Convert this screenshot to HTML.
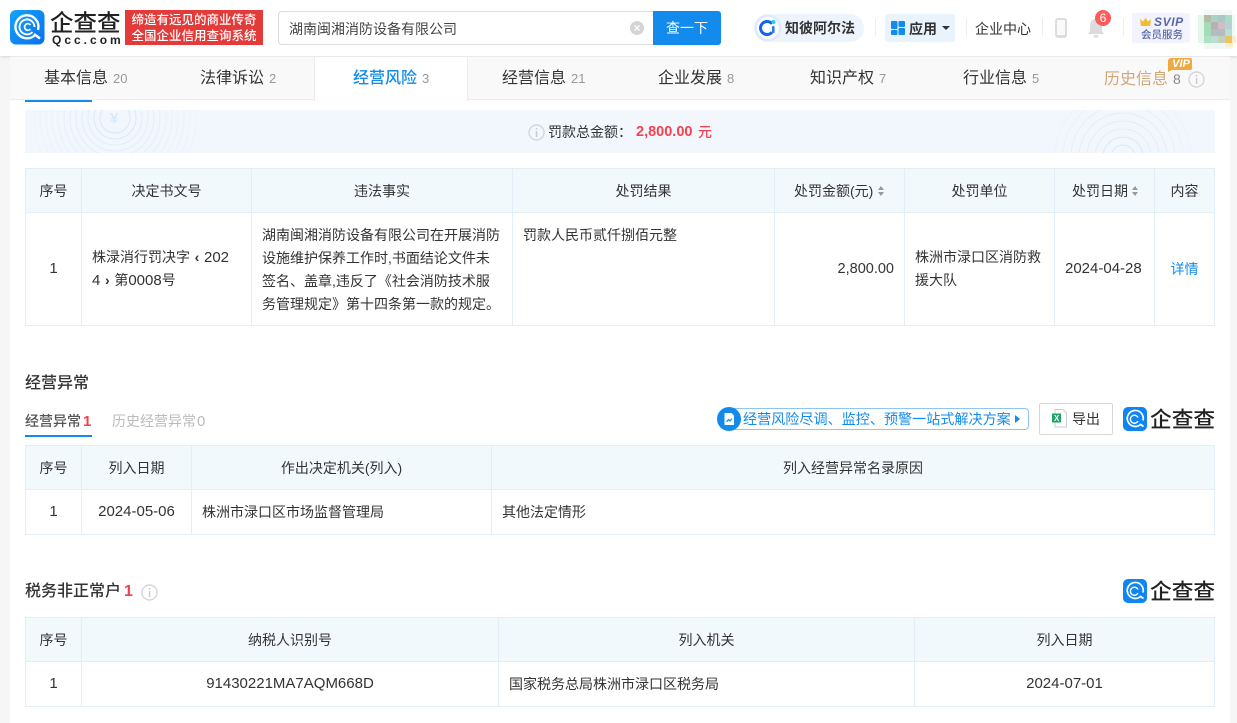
<!DOCTYPE html>
<html lang="zh"><head><meta charset="utf-8"><title>企查查</title>
<style>
*{box-sizing:border-box}
html,body{margin:0;padding:0}
body{width:1237px;height:723px;overflow:hidden;position:relative;background:#f6f6f6;font-family:"Liberation Sans","Noto Sans CJK SC",sans-serif;font-size:14px;color:#333}
.a{position:absolute;white-space:nowrap}
.t{position:absolute;white-space:nowrap;line-height:20px}
.c{text-align:center}
.n{font-size:15px}
.tb{position:absolute;left:25px;width:1190px;border:1px solid #e4eef6;background:#fff}
.th{position:absolute;left:0;top:0;right:0;height:44px;background:#f2f9fc;border-bottom:1px solid #e4eef6}
.l{position:absolute;top:0;bottom:0;width:1px;background:#e4eef6}
.tab{position:absolute;top:68px;font-size:16px;line-height:22px;color:#333;white-space:nowrap}
.tab small{font-size:13px;color:#999;margin-left:5px}
.sort{position:absolute;width:0;height:0;border-left:3px solid transparent;border-right:3px solid transparent}
.sep{position:absolute;top:18px;width:1px;height:18px;background:#eee}
</style></head><body>
<div class="a" style="left:10px;top:56px;width:1220px;height:667px;background:#fff"></div>

<!-- header -->
<div class="a" style="left:0;top:0;width:1237px;height:56px;background:#fff;box-shadow:0 1px 3px rgba(0,0,0,.14)"></div>
<svg class="a" style="left:10px;top:10px" width="35" height="35" viewBox="0 0 35 35"><defs><linearGradient id="g" x1="0" y1="0" x2="1" y2="1"><stop offset="0" stop-color="#14a5f5"/><stop offset="1" stop-color="#0a6ff0"/></linearGradient></defs><rect width="34.500" height="34.500" rx="6" fill="url(#g)"/><path d="M25.500 24.500A11.500 11.500 0 1 1 28 20" fill="none" stroke="#fff" stroke-width="2.400"/><path d="M22.500 22A7.500 7.500 0 1 1 24.500 17" fill="none" stroke="#fff" stroke-width="1.900"/><path d="M20.500 15a3.300 3.300 0 1 0 0 4" fill="none" stroke="#fff" stroke-width="1.700"/><path d="M24 24l6 4.500" stroke="#fff" stroke-width="2.400"/></svg>
<div class="a" style="left:50px;top:8px;font-size:23.500px;line-height:30px;color:#222;width:74px;font-weight:500">企查查</div>
<div class="a" style="left:52px;top:34px;font-size:12px;line-height:12px;color:#222;letter-spacing:3px;font-weight:700">Qcc.com</div>
<div class="a" style="left:125px;top:10px;width:138px;height:35px;background:#e33a3a;color:#fff;font-size:12.500px;line-height:16px;text-align:center;padding-top:2px;font-weight:500">缔造有远见的商业传奇<br>全国企业信用查询系统</div>
<div class="a" style="left:278px;top:11px;width:380px;height:34px;border:1px solid #ddd;border-right:0;border-radius:4px 0 0 4px;background:#fff"></div>
<div class="t" style="left:289px;top:19px;font-size:14px;color:#444">湖南闽湘消防设备有限公司</div>
<svg class="a" style="left:630px;top:21px" width="14" height="14"><circle cx="7" cy="7" r="7" fill="#d4d4d4"/><path d="M4.500 4.500l5 5m0-5l-5 5" stroke="#fff" stroke-width="1.300"/></svg>
<div class="a c" style="left:653px;top:11px;width:68px;height:34px;background:#128bed;color:#fff;line-height:34px;border-radius:0 3px 3px 0">查一下</div>

<div class="a" style="left:754px;top:14px;width:110px;height:28px;border-radius:14px;background:#edf4fe"></div>
<svg class="a" style="left:754px;top:14px" width="28" height="28"><circle cx="14" cy="14" r="13.500" fill="#dfeafc"/><circle cx="14" cy="14" r="11" fill="#fff"/><path d="M18 9.800a6.500 6.500 0 1 0 0 8.400" fill="none" stroke="#1463e8" stroke-width="3"/><rect x="18" y="12" width="2.600" height="7" rx="1" fill="#2a7cf0"/><circle cx="19.500" cy="8" r="2" fill="#1fd0f0"/></svg>
<div class="t" style="left:785px;top:18px;font-size:14px;font-weight:700;color:#333">知彼阿尔法</div>
<div class="sep" style="left:875px"></div>
<div class="a" style="left:885px;top:14px;width:70px;height:28px;background:#e9f3fe;border-radius:3px"></div>
<svg class="a" style="left:891px;top:21px" width="14" height="14"><rect width="6.500" height="8" rx="1" fill="#128bed"/><rect x="7.500" width="6.500" height="6" rx="1" fill="#128bed"/><rect y="9" width="6.500" height="5" rx="1" fill="#128bed"/><rect x="7.500" y="7" width="6.500" height="7" rx="1" fill="#128bed"/></svg>
<div class="t" style="left:909px;top:19px;font-weight:700;font-size:14px">应用</div>
<div class="a" style="left:942px;top:26px;width:0;height:0;border-left:4px solid transparent;border-right:4px solid transparent;border-top:4px solid #333"></div>
<div class="sep" style="left:966px"></div>
<div class="t" style="left:975px;top:19px;font-size:14px;color:#333">企业中心</div>
<div class="sep" style="left:1042px"></div>
<div class="a" style="left:1055px;top:18px;width:12px;height:20px;border:2px solid #dcdcdc;border-radius:3px;border-bottom-width:3px;background:#fafafa"></div>
<svg class="a" style="left:1087px;top:18px" width="18" height="20"><path d="M9 1c-4 0-6 3-6 7v5l-2 3h16l-2-3V8c0-4-2-7-6-7z" fill="#dcdcdc"/><rect x="6.500" y="17" width="5" height="2.500" rx="1" fill="#dcdcdc"/></svg>
<div class="a c" style="left:1095px;top:10px;width:16px;height:16px;border-radius:8px;background:#ff5b5b;color:#fff;font-size:12px;line-height:16px">6</div>
<div class="sep" style="left:1123px"></div>
<div class="a" style="left:1132px;top:13px;width:58px;height:30px;background:#f2f3fc;border-radius:2px"></div>
<svg class="a" style="left:1140px;top:18px" width="11" height="9"><path d="M0 1l3 2.500L5.500 0 8 3.500 11 1l-1 7H1z" fill="#f3bb2d"/></svg>
<div class="a" style="left:1154px;top:15px;font-size:12px;line-height:14px;font-weight:700;font-style:italic;color:#5a69a8;letter-spacing:.6px">SVIP</div>
<div class="a" style="left:1141px;top:28px;font-size:10.500px;line-height:14px;font-weight:500;color:#5a69a8">会员服务</div>
<svg class="a" style="left:1198px;top:9px" width="39" height="42" shape-rendering="crispEdges">
<rect x="0" y="6" width="6" height="28" fill="#e4f5ea"/><rect x="6" y="1" width="28" height="5" fill="#f3f9f5"/><rect x="6" y="34" width="28" height="6" fill="#f1f8f4"/><rect x="34" y="6" width="3" height="28" fill="#f2f8f4"/>
<rect x="6" y="6" width="7" height="7" fill="#b5bba8"/><rect x="13" y="6" width="7" height="7" fill="#a9d4c4"/><rect x="20" y="6" width="7" height="7" fill="#a9c7c4"/><rect x="27" y="6" width="7" height="7" fill="#acdcc5"/>
<rect x="6" y="13" width="7" height="7" fill="#a7dab8"/><rect x="13" y="13" width="7" height="7" fill="#b8b1ad"/><rect x="20" y="13" width="7" height="7" fill="#d0bfc4"/><rect x="27" y="13" width="7" height="7" fill="#b3d4d2"/>
<rect x="6" y="20" width="7" height="7" fill="#a6dcb6"/><rect x="13" y="20" width="7" height="7" fill="#b3bcc1"/><rect x="20" y="20" width="7" height="7" fill="#b3bcc1"/><rect x="27" y="20" width="7" height="7" fill="#bcdcd8"/>
<rect x="6" y="27" width="7" height="7" fill="#aee1c2"/><rect x="13" y="27" width="7" height="7" fill="#bcdcd4"/><rect x="20" y="27" width="7" height="7" fill="#c5d0c0"/><rect x="27" y="27" width="7" height="7" fill="#ebc35f"/><rect x="34" y="27" width="4" height="7" fill="#f8efd0"/><rect x="27" y="34" width="8" height="4" fill="#f8efd0"/>
</svg>

<!-- tabs -->
<div class="a" style="left:10px;top:57px;width:1220px;height:43px;background:#f9f9f9;border-bottom:1px solid #ededed"></div>
<div class="a" style="left:314px;top:57px;width:154px;height:44px;background:#fff;border-left:1px solid #ededed;border-right:1px solid #ededed"></div>
<div class="a" style="left:25px;top:100px;width:67px;height:2px;background:#128bed"></div>
<div class="tab" style="left:44px">基本信息<small>20</small></div>
<div class="tab" style="left:200px">法律诉讼<small>2</small></div>
<div class="tab" style="left:353px;color:#128bed;font-weight:500">经营风险<small style="font-weight:400">3</small></div>
<div class="tab" style="left:502px">经营信息<small>21</small></div>
<div class="tab" style="left:658px">企业发展<small>8</small></div>
<div class="tab" style="left:810px">知识产权<small>7</small></div>
<div class="tab" style="left:963px">行业信息<small>5</small></div>
<div class="tab" style="left:1104px;color:#d0a877">历史信息<small style="font-size:14px;color:#888">8</small></div>
<svg class="a" style="left:1168px;top:58px" width="24" height="14"><path d="M3 0h19a2 2 0 0 1 2 2v8a2 2 0 0 1-2 2H4l-4 2V3a3 3 0 0 1 3-3z" fill="#efa93f"/></svg>
<div class="a c" style="left:1170px;top:58px;width:22px;font-size:11px;line-height:12px;color:#fff;font-weight:700;font-style:italic">VIP</div>
<svg class="a" style="left:1188px;top:71px" width="17" height="17"><circle cx="8.500" cy="8.500" r="7.500" fill="none" stroke="#d6d6d6" stroke-width="1.400"/><rect x="7.800" y="7" width="1.500" height="6" fill="#ccc"/><rect x="7.800" y="4" width="1.500" height="1.600" fill="#ccc"/></svg>

<!-- fine banner -->
<div class="a" style="left:25px;top:110px;width:1190px;height:43px;background:#f2f7fe;overflow:hidden">
<svg width="1190" height="43" style="position:absolute;left:0;top:0"><g fill="none" stroke="#e2eefc"><circle cx="90" cy="8" r="15" stroke="#d9e8fb"/><circle cx="90" cy="8" r="21" stroke="#d9e8fb"/><circle cx="90" cy="8" r="27"/><circle cx="90" cy="8" r="33"/><circle cx="90" cy="8" r="39"/><circle cx="90" cy="8" r="45" opacity=".9"/><circle cx="90" cy="8" r="51" opacity=".8"/><circle cx="90" cy="8" r="57" opacity=".7"/><circle cx="90" cy="8" r="63" opacity=".6"/><circle cx="90" cy="8" r="69" opacity=".5"/><circle cx="90" cy="8" r="75" opacity=".4"/><circle cx="90" cy="8" r="81" opacity=".3"/><circle cx="1098" cy="47" r="12" stroke="#d9e8fb"/><circle cx="1098" cy="47" r="20" stroke="#d9e8fb"/><circle cx="1098" cy="47" r="28"/><circle cx="1098" cy="47" r="36"/><circle cx="1098" cy="47" r="44"/><circle cx="1098" cy="47" r="52" opacity=".8"/><circle cx="1098" cy="47" r="60" opacity=".6"/><circle cx="1098" cy="47" r="68" opacity=".4"/></g></svg>
<div class="a" style="left:85px;top:-1px;font-size:15px;line-height:20px;color:#d9e8fb;font-weight:700">¥</div>
</div>
<svg class="a" style="left:528px;top:124px" width="17" height="17"><circle cx="8.500" cy="8.500" r="7.500" fill="none" stroke="#d6d6d6" stroke-width="1.400"/><rect x="7.800" y="7" width="1.500" height="6" fill="#ccc"/><rect x="7.800" y="4" width="1.500" height="1.600" fill="#ccc"/></svg>
<div class="t" style="left:548px;top:122px;font-size:14px;color:#333">罚款总金额：</div>
<div class="t" style="left:636px;top:122px;font-size:14.500px;font-weight:700;color:#f5414d">2,800.00</div>
<div class="t" style="left:698px;top:122px;font-size:14px;font-weight:500;color:#f5414d">元</div>

<!-- table 1 -->
<div class="tb" style="top:168px;height:158px"><div class="th"></div>
<div class="l" style="left:55px"></div><div class="l" style="left:225px"></div><div class="l" style="left:486px"></div><div class="l" style="left:748px"></div><div class="l" style="left:878px"></div><div class="l" style="left:1028px"></div><div class="l" style="left:1128px"></div></div>
<div class="t c" style="left:26px;width:55px;top:181px">序号</div>
<div class="t c" style="left:82px;width:169px;top:181px">决定书文号</div>
<div class="t c" style="left:252px;width:260px;top:181px">违法事实</div>
<div class="t c" style="left:513px;width:261px;top:181px">处罚结果</div>
<div class="t" style="left:794px;top:181px">处罚金额(元)</div>
<div class="sort" style="left:878px;top:186px;border-bottom:4px solid #999"></div><div class="sort" style="left:878px;top:192px;border-top:4px solid #999"></div>
<div class="t c" style="left:905px;width:149px;top:181px">处罚单位</div>
<div class="t" style="left:1072px;top:181px">处罚日期</div>
<div class="sort" style="left:1132px;top:186px;border-bottom:4px solid #999"></div><div class="sort" style="left:1132px;top:192px;border-top:4px solid #999"></div>
<div class="t c" style="left:1155px;width:59px;top:181px">内容</div>

<div class="t c n" style="left:26px;width:55px;top:259px">1</div>
<div class="t" style="left:92px;top:246px;line-height:23px">株渌消行罚决字<span style="display:inline-block;width:14px;text-align:center;font-weight:700">‹</span><span class="n">202</span><br><span class="n">4</span><span style="display:inline-block;width:14px;text-align:center;font-weight:700">›</span>第<span class="n">0008</span>号</div>
<div class="t" style="left:262px;top:224px;line-height:23px">湖南闽湘消防设备有限公司在开展消防<br>设施维护保养工作时,书面结论文件未<br>签名、盖章,违反了《社会消防技术服<br>务管理规定》第十四条第一款的规定。</div>
<div class="t" style="left:523px;top:225px">罚款人民币贰仟捌佰元整</div>
<div class="t" style="right:343px;top:259px;font-size:14.500px">2,800.00</div>
<div class="t" style="left:915px;top:246px;line-height:23px">株洲市渌口区消防救<br>援大队</div>
<div class="t n" style="left:1065px;top:259px">2024-04-28</div>
<div class="t c" style="left:1155px;width:59px;top:259px;color:#128bed">详情</div>

<!-- section 2 -->
<div class="t" style="left:25px;top:373px;font-size:16px;line-height:22px;font-weight:500;color:#333">经营异常</div>
<div class="t" style="left:25px;top:411px;font-weight:500;color:#555">经营异常<span style="color:#f5414d;font-size:15px;margin-left:2px;font-weight:700">1</span></div>
<div class="t" style="left:112px;top:411px;color:#bbb">历史经营异常<span style="font-size:15px;margin-left:1px">0</span></div>
<div class="a" style="left:25px;top:435px;width:67px;height:2px;background:#128bed"></div>
<div class="a" style="left:724px;top:408px;width:305px;height:22px;border:1px solid #8fc4f3;border-radius:4px;background:#fff"></div>
<svg class="a" style="left:717px;top:407px" width="24" height="24"><circle cx="12" cy="12" r="12" fill="#128bed"/><path d="M7.500 6h7l2.500 2.500V18h-9.500z" fill="#fff"/><path d="M9.500 15l2-2.500 1.500 1.500 2-2.500" stroke="#128bed" stroke-width="1.200" fill="none"/></svg>
<div class="t" style="left:743px;top:409px;font-size:14.100px;color:#128bed">经营风险尽调、监控、预警一站式解决方案</div>
<div class="a" style="left:1015px;top:415px;width:0;height:0;border-top:4px solid transparent;border-bottom:4px solid transparent;border-left:5px solid #128bed"></div>
<div class="a" style="left:1039px;top:403px;width:74px;height:32px;border:1px solid #d8d8d8;border-radius:2px;background:#fff"></div>
<svg class="a" style="left:1052px;top:409px" width="15" height="19"><path d="M3 .5h8l3.500 3.500v14H3z" fill="#fff" stroke="#ccc"/><rect y="4.500" width="9" height="9" fill="#1ea362"/><text x="2" y="12" font-size="8" font-weight="700" fill="#fff" font-family="Liberation Sans">X</text></svg>
<div class="t" style="left:1072px;top:409px;color:#333">导出</div>
<svg class="a" style="left:1123px;top:407px" width="24" height="24"><rect width="24" height="24" rx="5" fill="#0e85f0"/><path d="M17.500 17.500A8 8 0 1 1 20 13.500" fill="none" stroke="#fff" stroke-width="1.700"/><path d="M15 10.500a4 4 0 1 0 0 3.500" fill="none" stroke="#fff" stroke-width="1.400"/><path d="M17 17l3.500 2.500" stroke="#fff" stroke-width="1.700"/></svg>
<div class="a" style="left:1150px;top:406px;font-size:21.700px;line-height:28px;color:#222;font-weight:500">企查查</div>

<!-- table 2 -->
<div class="tb" style="top:445px;height:90px"><div class="th"></div>
<div class="l" style="left:55px"></div><div class="l" style="left:165px"></div><div class="l" style="left:465px"></div></div>
<div class="t c" style="left:26px;width:55px;top:458px">序号</div>
<div class="t c" style="left:82px;width:109px;top:458px">列入日期</div>
<div class="t c" style="left:192px;width:299px;top:458px">作出决定机关(列入)</div>
<div class="t c" style="left:492px;width:722px;top:458px">列入经营异常名录原因</div>
<div class="t c n" style="left:26px;width:55px;top:502px">1</div>
<div class="t c n" style="left:82px;width:109px;top:502px">2024-05-06</div>
<div class="t" style="left:202px;top:502px">株洲市渌口区市场监督管理局</div>
<div class="t" style="left:502px;top:502px">其他法定情形</div>

<!-- section 3 -->
<div class="t" style="left:25px;top:581px;font-size:16px;line-height:22px;font-weight:500;color:#333">税务非正常户<span style="color:#f5414d;margin-left:3px;font-weight:700">1</span></div>
<svg class="a" style="left:141px;top:584px" width="17" height="17"><circle cx="8.500" cy="8.500" r="7.500" fill="none" stroke="#d6d6d6" stroke-width="1.400"/><rect x="7.800" y="7" width="1.500" height="6" fill="#ccc"/><rect x="7.800" y="4" width="1.500" height="1.600" fill="#ccc"/></svg>
<svg class="a" style="left:1123px;top:579px" width="24" height="24"><rect width="24" height="24" rx="5" fill="#0e85f0"/><path d="M17.500 17.500A8 8 0 1 1 20 13.500" fill="none" stroke="#fff" stroke-width="1.700"/><path d="M15 10.500a4 4 0 1 0 0 3.500" fill="none" stroke="#fff" stroke-width="1.400"/><path d="M17 17l3.500 2.500" stroke="#fff" stroke-width="1.700"/></svg>
<div class="a" style="left:1150px;top:578px;font-size:21.700px;line-height:28px;color:#222;font-weight:500">企查查</div>

<!-- table 3 -->
<div class="tb" style="top:617px;height:90px"><div class="th"></div>
<div class="l" style="left:55px"></div><div class="l" style="left:472px"></div><div class="l" style="left:888px"></div></div>
<div class="t c" style="left:26px;width:55px;top:630px">序号</div>
<div class="t c" style="left:82px;width:416px;top:630px">纳税人识别号</div>
<div class="t c" style="left:499px;width:415px;top:630px">列入机关</div>
<div class="t c" style="left:915px;width:299px;top:630px">列入日期</div>
<div class="t c n" style="left:26px;width:55px;top:674px">1</div>
<div class="t c n" style="left:82px;width:416px;top:674px">91430221MA7AQM668D</div>
<div class="t" style="left:509px;top:674px">国家税务总局株洲市渌口区税务局</div>
<div class="t c n" style="left:915px;width:299px;top:674px">2024-07-01</div>
</body></html>
